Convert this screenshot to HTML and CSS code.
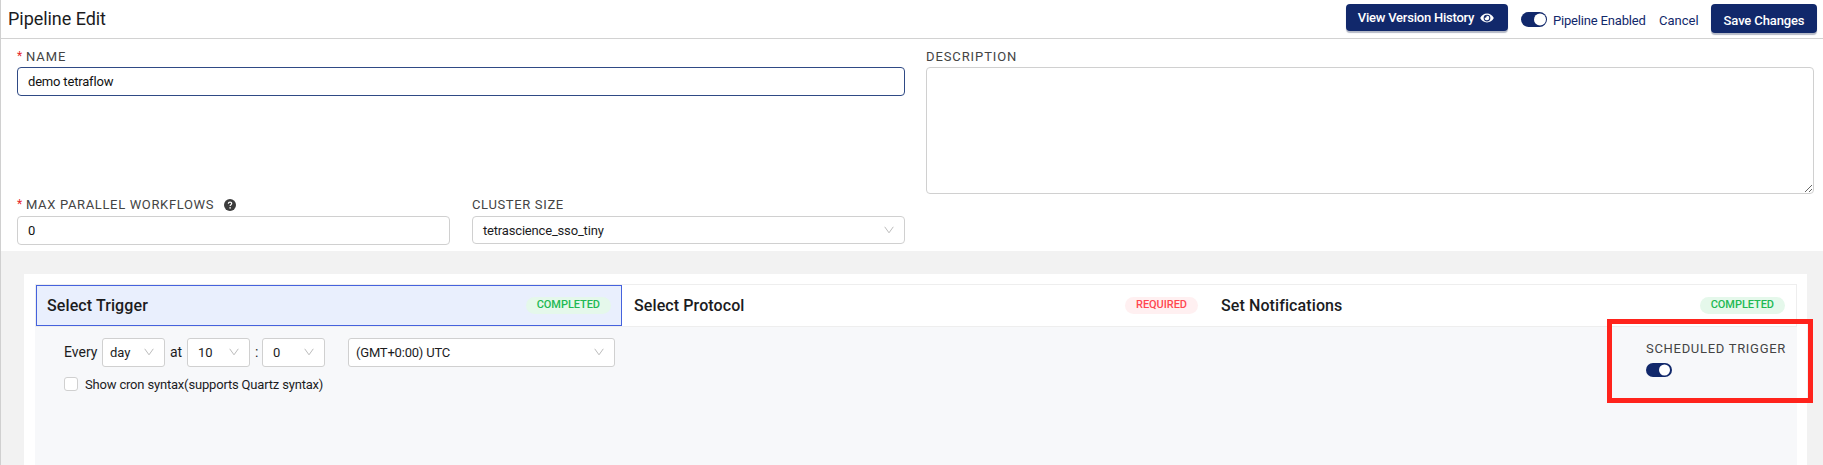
FILE: index.html
```html
<!DOCTYPE html>
<html lang="en">
<head>
    <meta charset="UTF-8">
    <title>Pipeline Edit</title>
    <link rel="stylesheet" href="styles.css">
</head>

<body>
<div class="page">
    <header class="header">
        <h1>Pipeline Edit</h1>
        <div class="actions">
            <button class="btn btn-history">View Version History
                <svg class="eye" viewBox="0 0 576 512"><path fill="currentColor" d="M572.5 241.400C518.300 135.600 410.900 64 288 64S57.700 135.600 3.500 241.400a32.400 32.400 0 0 0 0 29.200C57.700 376.400 165.100 448 288 448s230.300-71.600 284.500-177.400a32.400 32.400 0 0 0 0-29.200zM288 400a144 144 0 1 1 144-144 143.900 143.900 0 0 1-144 144zm0-240a95.300 95.300 0 0 0-25.300 3.800 47.900 47.900 0 0 1-66.900 66.900A95.800 95.800 0 1 0 288 160z"/></svg>
            </button>
            <span class="switch"></span>
            <span class="switch-label">Pipeline Enabled</span>
            <a class="cancel">Cancel</a>
            <button class="btn btn-save">Save Changes</button>
        </div>
    </header>

    <div class="form">
        <div class="form-left">
            <div class="field field-name">
                <label class="required">NAME</label>
                <input class="input focused" value="demo tetraflow">
            </div>
            <div class="form-row">
                <div class="field">
                    <label class="required">MAX PARALLEL WORKFLOWS
                        <svg class="help" viewBox="0 0 12 12"><circle cx="6" cy="6" r="6" fill="#3c3c3c"/><path d="M4.300 4.700C4.400 2.500 7.800 2.600 7.700 4.600C7.700 5.700 6.100 5.800 6.100 7.100" fill="none" stroke="#fff" stroke-width="1.200"/><circle cx="6.100" cy="8.900" r=".8" fill="#fff"/></svg>
                    </label>
                    <input class="input" value="0">
                </div>
                <div class="field">
                    <label>CLUSTER SIZE</label>
                    <div class="select select-cluster">
                        <span>tetrascience_sso_tiny</span>
                        <svg class="arrow" viewBox="0 0 10 8"><path d="M.7.8 5 6.800 9.300.8"/></svg>
                    </div>
                </div>
            </div>
        </div>
        <div class="field form-right">
            <label>DESCRIPTION</label>
            <textarea class="input"></textarea>
        </div>
    </div>

    <div class="main">
        <div class="card">
            <div class="tabs">
                <div class="tab active">
                    <h2>Select Trigger</h2>
                    <span class="badge completed">COMPLETED</span>
                </div>
                <div class="tab">
                    <h2>Select Protocol</h2>
                    <span class="badge missing">REQUIRED</span>
                </div>
                <div class="tab">
                    <h2>Set Notifications</h2>
                    <span class="badge completed">COMPLETED</span>
                </div>
            </div>
            <div class="content">
                <div class="schedule">
                    <div class="cron">
                        <span class="every">Every</span>
                        <div class="select small day">
                            <span>day</span>
                            <svg class="arrow" viewBox="0 0 10 8"><path d="M.7.8 5 6.800 9.300.8"/></svg>
                        </div>
                        <span class="at">at</span>
                        <div class="select small">
                            <span>10</span>
                            <svg class="arrow" viewBox="0 0 10 8"><path d="M.7.8 5 6.800 9.300.8"/></svg>
                        </div>
                        <span class="colon">:</span>
                        <div class="select small">
                            <span>0</span>
                            <svg class="arrow" viewBox="0 0 10 8"><path d="M.7.8 5 6.800 9.300.8"/></svg>
                        </div>
                        <div class="select timezone">
                            <span>(GMT+0:00) UTC</span>
                            <svg class="arrow" viewBox="0 0 10 8"><path d="M.7.8 5 6.800 9.300.8"/></svg>
                        </div>
                    </div>
                    <div class="show-cron">
                        <span class="checkbox"></span>
                        <span>Show cron syntax(supports Quartz syntax)</span>
                    </div>
                </div>
                <div class="scheduled">
                    <label>SCHEDULED TRIGGER</label>
                    <span class="switch"></span>
                    <div class="highlight"></div>
                </div>
            </div>
        </div>
    </div>
</div>
</body>
</html>
```
FILE: styles.css
```css
* {
    box-sizing: border-box;
}

body {
    margin: 0;
    font-family: Roboto, sans-serif;
    font-size: 13px;
    letter-spacing: -0.18px;
    color: #1c1c1e;
    overflow: hidden;
}

.page {
    display: flex;
    flex-direction: column;
    height: 465px;
    border-left: 1px solid #d0d0d0;
    background: #fff;
}

.header {
    display: flex;
    justify-content: space-between;
    height: 39px;
    padding: 4px 6px 0 7px;
    border-bottom: 1px solid #d2d2d2;
}

h1 {
    margin: 4px 0 0;
    font-size: 18px;
    font-weight: 400;
    line-height: 22px;
    letter-spacing: -0.05px;
}

.actions {
    display: flex;
    align-items: flex-start;
    color: #11286b;
    line-height: 15px;
}

.btn {
    display: flex;
    align-items: center;
    justify-content: center;
    padding: 0;
    border: none;
    border-radius: 4px;
    background: #11286b;
    box-shadow: 0 2px 1px #b4b9c6;
    color: #fff;
    font-family: inherit;
    font-size: 13px;
    font-weight: 500;
    letter-spacing: -0.13px;
}

.btn-history {
    width: 162px;
    height: 27px;
    margin-right: 13px;
    padding-right: 2px;
    letter-spacing: -0.22px;
}

.btn-save {
    width: 106px;
    height: 29px;
    padding-top: 3px;
}

.eye {
    width: 14px;
    height: 12px;
    margin-left: 6px;
}

.switch {
    display: block;
    width: 26px;
    height: 14px;
    border-radius: 7px;
    background: #11286b;
}

.switch::after {
    content: "";
    display: block;
    width: 11px;
    height: 11px;
    margin-left: 13px;
    border-radius: 50%;
    background: #fff;
    transform: translateY(1.5px);
}

.actions .switch {
    height: 15px;
    margin-top: 8px;
    border-radius: 8px;
}

.actions .switch::after {
    width: 12px;
    height: 12px;
}

.switch-label {
    width: 92px;
    margin: 9px 14px 0 6px;
    white-space: nowrap;
}

.cancel {
    width: 38px;
    margin: 9px 14px 0 0;
    letter-spacing: 0;
}

.form {
    display: grid;
    grid-template-columns: 888px 888px;
    gap: 21px;
    height: 212px;
    padding: 9px 0 0 16px;
}

.field {
    display: flex;
    flex-direction: column;
}

label {
    display: flex;
    align-items: center;
    height: 19px;
    padding-bottom: 2px;
    letter-spacing: 0.9px;
    line-height: 16px;
    color: #444;
    white-space: nowrap;
}

.required::before {
    content: "*";
    width: 9px;
    margin-top: -2px;
    font-size: 12px;
    letter-spacing: 0;
    color: #e5272c;
}

.help {
    width: 12px;
    height: 12px;
    margin: 1px 0 0 10px;
}

.input {
    width: 100%;
    height: 29px;
    padding: 0 10px;
    border: 1px solid #d0d0d0;
    border-radius: 4px;
    outline: none;
    background: #fff;
    font-family: inherit;
    font-size: 13px;
    letter-spacing: -0.18px;
    color: #111;
}

.focused {
    border-color: #2f4a85;
}

textarea.input {
    height: 127px;
}

.field-name {
    height: 149px;
}

.form-row {
    display: grid;
    grid-template-columns: 433px 433px;
    gap: 22px;
}

.form-row label {
    padding-bottom: 4px;
    letter-spacing: 0.65px;
}

.select {
    display: flex;
    align-items: center;
    justify-content: space-between;
    height: 29px;
    padding: 0 10px 1px 7px;
    border: 1px solid #d0d0d0;
    border-radius: 3px;
    background: #fff;
}

.select-cluster {
    height: 28px;
    padding: 0 10px;
    border-radius: 4px;
}

.arrow {
    width: 10px;
    height: 8px;
    fill: none;
    stroke: #bcbcbc;
    stroke-width: 1;
}

.main {
    flex: 1;
    padding: 23px 16px 0 23px;
    background: #f2f2f2;
}

.card {
    display: flex;
    flex-direction: column;
    height: 100%;
    padding: 10px 10px 0 11px;
    background: #fff;
}

.tabs {
    display: grid;
    grid-template-columns: 588px 587px 587px;
    height: 43px;
    border: 1px solid #eee;
}

.tab {
    display: flex;
    align-items: center;
    justify-content: space-between;
    padding: 0 13px 0 10px;
}

.tab.active {
    width: 586px;
    padding: 0 10px;
    border: 1px solid #4562dd;
    background: #e9effd;
}

h2 {
    margin: 0;
    font-size: 16px;
    font-weight: 500;
    letter-spacing: 0.1px;
}

.badge {
    height: 17px;
    padding: 0 11px;
    border-radius: 9px;
    font-size: 11px;
    font-weight: 500;
    line-height: 15px;
    letter-spacing: -0.05px;
}

.completed {
    background: #e5f8eb;
    color: #21b953;
}

.missing {
    background: #fff0f1;
    color: #ff4750;
}

.content {
    flex: 1;
    display: flex;
    justify-content: space-between;
    padding: 11px 10px 0 29px;
    background: #f7f8fa;
}

.cron {
    display: flex;
    align-items: center;
    font-size: 14px;
    letter-spacing: 0;
}

.cron .select {
    font-size: 13px;
}

.every {
    width: 38px;
}

.at {
    width: 22px;
    padding-left: 5px;
}

.colon {
    width: 12px;
    padding-left: 5px;
}

.every,
.at,
.colon {
    padding-bottom: 1px;
}

.small {
    width: 63px;
    padding-left: 10px;
}

.day {
    padding-left: 7px;
}

.timezone {
    width: 267px;
    margin-left: 23px;
    letter-spacing: -0.2px;
}

.show-cron {
    display: flex;
    align-items: center;
    gap: 7px;
    height: 16px;
    margin-top: 9px;
}

.checkbox {
    width: 14px;
    height: 14px;
    border: 1px solid #d0d0d0;
    border-radius: 3px;
    background: #fff;
}

.scheduled {
    position: relative;
    width: 141px;
    padding-top: 2px;
}

.scheduled label {
    height: 23px;
    padding-bottom: 5px;
    letter-spacing: 0.7px;
}

.highlight {
    position: absolute;
    top: -19px;
    left: -39px;
    width: 206px;
    height: 84px;
    border: 5px solid #ff231c;
}
```
